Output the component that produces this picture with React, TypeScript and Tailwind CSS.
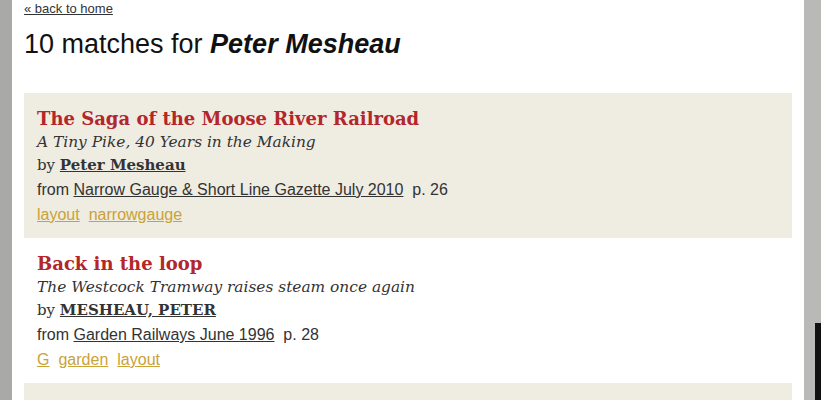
import React from 'react';

interface Match {
  title: string;
  subtitle: string;
  author: string;
  source: string;
  page: string;
  tags: string[];
}

const matches: Match[] = [
  {
    title: 'The Saga of the Moose River Railroad',
    subtitle: 'A Tiny Pike, 40 Years in the Making',
    author: 'Peter Mesheau',
    source: 'Narrow Gauge & Short Line Gazette July 2010',
    page: 'p. 26',
    tags: ['layout', 'narrowgauge'],
  },
  {
    title: 'Back in the loop',
    subtitle: 'The Westcock Tramway raises steam once again',
    author: 'MESHEAU, PETER',
    source: 'Garden Railways June 1996',
    page: 'p. 28',
    tags: ['G', 'garden', 'layout'],
  },
  {
    title: 'A Tiny Pike',
    subtitle: '',
    author: 'Peter Mesheau',
    source: 'Model Railroader',
    page: 'p. 1',
    tags: ['layout'],
  },
];

const serif = "font-['Georgia','DejaVu_Serif',serif]";
const sans = "font-['Arial','Liberation_Sans',sans-serif]";

const MatchCard = ({ m, shaded }: { m: Match; shaded: boolean }) => (
  <div className={`${shaded ? 'bg-[#efece2]' : 'bg-white'} pt-[14px] pb-[10px] px-[13px]`}>
    <div className={`${serif} text-[18px] leading-[24px] font-bold text-[#b3262a]`}>{m.title}</div>
    <div className={`${serif} text-[15.4px] leading-[22px] italic text-[#333]`}>{m.subtitle}</div>
    <div className={`${serif} text-[15px] leading-[25px] text-[#333]`}>
      by{' '}
      <a href="#" className="font-bold underline">
        {m.author}
      </a>
    </div>
    <div className={`${sans} text-[16px] leading-[24px] text-[#333]`}>
      from{' '}
      <a href="#" className="underline">
        {m.source}
      </a>
      &nbsp; {m.page}
    </div>
    <div className={`${sans} text-[16px] leading-[26px] flex gap-[9px]`}>
      {m.tags.map((t) => (
        <a key={t} href="#" className="text-[#c9a238] underline">
          {t}
        </a>
      ))}
    </div>
  </div>
);

export default function App() {
  return (
    <div className="flex h-[400px] w-[821px] overflow-hidden bg-white">
      <div className="w-[12px] shrink-0 bg-[#a9aaa8]" />
      <div className="flex-1 pl-[12px] pr-[12px]">
        <a href="#" className={`${sans} block text-[13px] leading-[18px] text-[#333] underline`}>
          « back to home
        </a>
        <h1 className={`${sans} mt-[11px] text-[27px] leading-[30px] text-[#111]`}>
          10 matches for <b className="italic">Peter Mesheau</b>
        </h1>
        <div className="mt-[34px]">
          {matches.map((m, i) => (
            <MatchCard key={i} m={m} shaded={i % 2 === 0} />
          ))}
        </div>
      </div>
      <div className="flex w-[17px] shrink-0 flex-col bg-[#b9bab8]">
        <div className="h-[323px]" />
        <div className="flex flex-1">
          <div className="w-[11px]" />
          <div className="flex-1 bg-[#111]" />
        </div>
      </div>
    </div>
  );
}
